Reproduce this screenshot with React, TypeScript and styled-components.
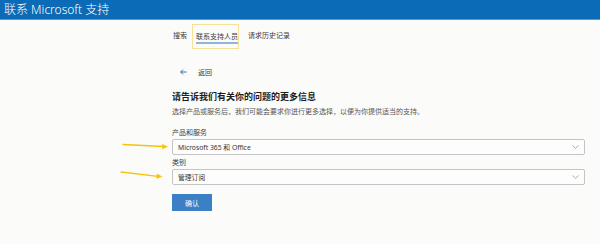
import { FC } from 'react'
import styled, { createGlobalStyle } from 'styled-components'

const GlobalStyle = createGlobalStyle`
  html, body {
    margin: 0;
    padding: 0;
    background: #fbfcfa;
  }
  body {
    font-family: 'Noto Sans', 'Noto Sans CJK SC', sans-serif;
    color: #262626;
    width: 600px;
    height: 244px;
    overflow: hidden;
  }
`

const tabs = [
  { id: 'search', label: '搜索' },
  { id: 'contact', label: '联系支持人员' },
  { id: 'history', label: '请求历史记录' }
]

const fields = [
  { id: 'product', label: '产品和服务', value: 'Microsoft 365 和 Office' },
  { id: 'category', label: '类别', value: '管理订阅' }
]

const App: FC = () => {
  return (
    <Page>
      <GlobalStyle />
      <Header>联系 Microsoft 支持</Header>
      <Main>
        <Tabs>
          {tabs.map((tab) => (
            <Tab key={tab.id} $active={tab.id === 'contact'}>
              <TabLabel $active={tab.id === 'contact'}>{tab.label}</TabLabel>
            </Tab>
          ))}
        </Tabs>
        <BackRow>
          <svg width="7" height="6" viewBox="0 0 7 6">
            <path d="M3 0.5 L0.7 3 L3 5.5 M0.7 3 H6.5" fill="none" stroke="#1f5fa8" strokeWidth="0.9" />
          </svg>
          <BackText>返回</BackText>
        </BackRow>
        <Heading>请告诉我们有关你的问题的更多信息</Heading>
        <Subtitle>选择产品或服务后，我们可能会要求你进行更多选择，以便为你提供适当的支持。</Subtitle>
        {fields.map((field, i) => (
          <Field key={field.id} $first={i === 0}>
            <FieldLabel>{field.label}</FieldLabel>
            <Select>
              <span>{field.value}</span>
              <svg width="7" height="4" viewBox="0 0 7 4">
                <path d="M0.5 0.5 L3.5 3.3 L6.5 0.5" fill="none" stroke="#9a9a9a" strokeWidth="0.8" />
              </svg>
            </Select>
          </Field>
        ))}
        <ConfirmButton>确认</ConfirmButton>
      </Main>
      <Annotations width="600" height="244" viewBox="0 0 600 244">
        <g stroke="#f6c20a" strokeWidth="1.3" fill="#f6c20a" strokeLinecap="round">
          <line x1="123" y1="144.5" x2="164" y2="146.5" />
          <path d="M168 146.8 L162 144 L162.3 149.2 Z" stroke="none" />
          <line x1="121" y1="172" x2="158" y2="176.3" />
          <path d="M162.5 176.8 L156.8 173.6 L156.4 178.8 Z" stroke="none" />
        </g>
      </Annotations>
    </Page>
  )
}

const Page = styled.div`
  position: relative;
  width: 600px;
  height: 244px;
`

const Header = styled.header`
  height: 19px;
  background: #0b6bb7;
  border-bottom: 1px solid #5d9bd3;
  color: #ffffff;
  font-size: 12px;
  font-weight: 300;
  line-height: 19px;
  padding-left: 4px;
`

const Main = styled.main`
  display: flex;
  flex-direction: column;
  padding: 0 15px 0 172px;
`

const Tabs = styled.nav`
  display: flex;
  align-items: stretch;
  gap: 4px;
  height: 25px;
  margin-top: 4px;
`

const Tab = styled.div<{ $active?: boolean }>`
  display: flex;
  align-items: center;
  padding: ${(p) => (p.$active ? '0 0 0 3px' : '0')};
  margin-right: ${(p) => (p.$active ? '4px' : '0')};
  border: 1px solid ${(p) => (p.$active ? '#f6e19a' : 'transparent')};
  font-size: 7px;
  color: #3a3a3a;
`

const TabLabel = styled.span<{ $active?: boolean }>`
  padding-bottom: 1px;
  margin-top: ${(p) => (p.$active ? '2px' : '0')};
  border-bottom: 2px solid ${(p) => (p.$active ? '#8fb5db' : 'transparent')};
  line-height: 9px;
`

const BackRow = styled.div`
  display: flex;
  align-items: center;
  height: 12px;
  margin-top: 17px;
  padding-left: 8px;
  gap: 11px;
`

const BackText = styled.span`
  font-size: 7px;
  color: #3a3a3a;
`

const Heading = styled.h1`
  margin: 13px 0 0;
  font-size: 9px;
  line-height: 12px;
  font-weight: 700;
  color: #1e1e1e;
`

const Subtitle = styled.p`
  margin: 4px 0 0;
  font-size: 7px;
  line-height: 10px;
  color: #555;
`

const Field = styled.div<{ $first?: boolean }>`
  display: flex;
  flex-direction: column;
  margin-top: ${(p) => (p.$first ? '11px' : '3px')};
  gap: 1px;
`

const FieldLabel = styled.label`
  font-size: 7px;
  line-height: 10px;
  color: #3a3a3a;
`

const Select = styled.div`
  display: flex;
  align-items: center;
  justify-content: space-between;
  height: 14px;
  padding: 0 5px;
  border: 1px solid #c4c4c4;
  border-radius: 2px;
  background: #fdfdfd;
  font-size: 6.8px;
  color: #333;
`

const ConfirmButton = styled.button`
  align-self: flex-start;
  width: 40px;
  height: 17px;
  margin-top: 9px;
  padding: 0;
  border: none;
  background: #3b80c4;
  color: #ffffff;
  font-family: inherit;
  font-size: 7px;
`

const Annotations = styled.svg`
  position: absolute;
  left: 0;
  top: 0;
  pointer-events: none;
`

export default App
